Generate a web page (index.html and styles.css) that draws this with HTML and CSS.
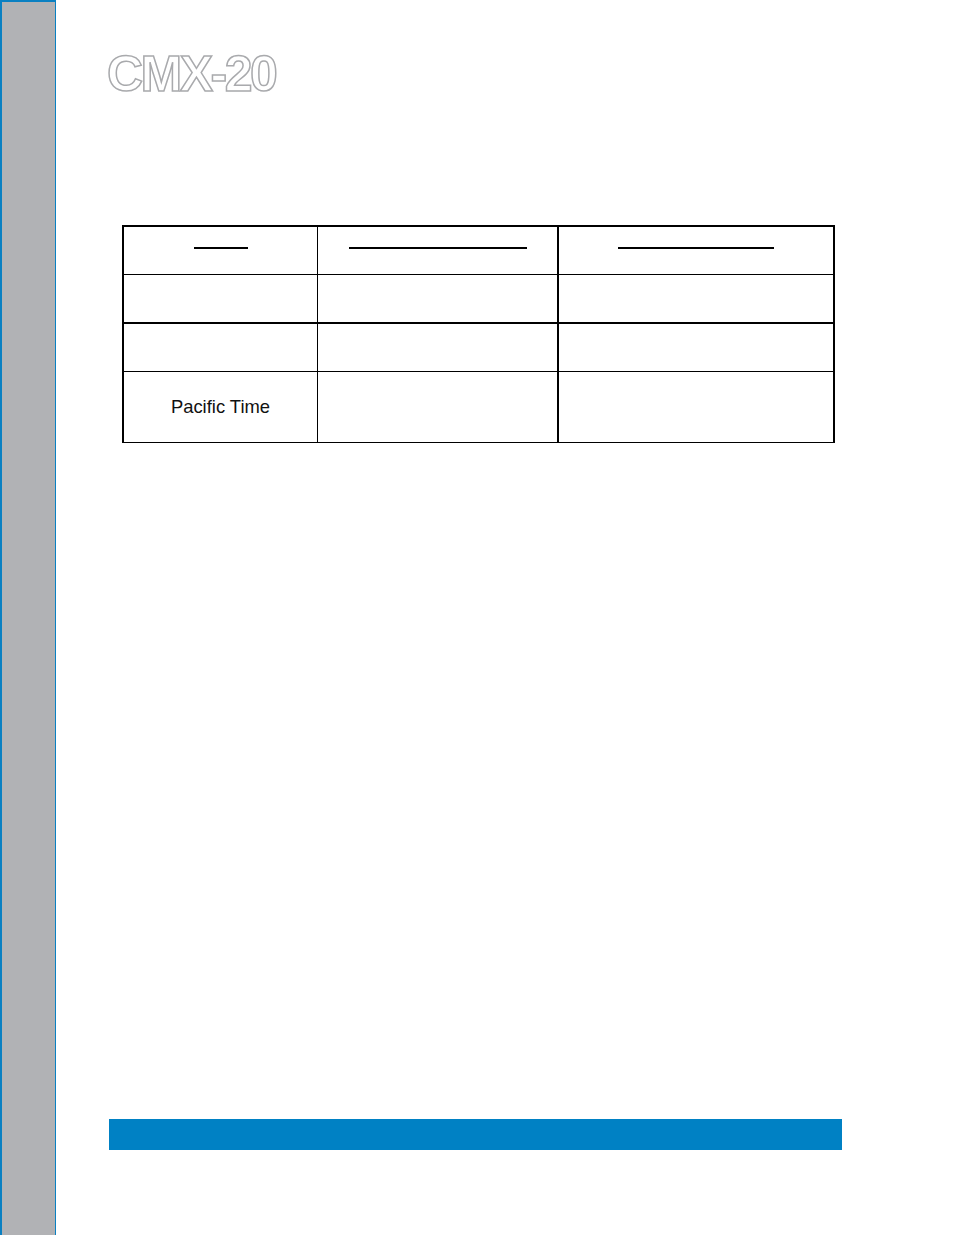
FILE: index.html
```html
<!DOCTYPE html>
<html lang="en">
<head>
<meta charset="utf-8">
<title>CMX-20</title>
<link rel="stylesheet" href="styles.css">
</head>
<body>
<div class="page">
  <aside class="sidebar"></aside>
  <main class="main">
    <h1 class="title">CMX-20</h1>
    <div class="grid">
      <div class="cell c1 head"><span class="rule r1"></span></div>
      <div class="cell c2 head"><span class="rule r2"></span></div>
      <div class="cell c3 head"><span class="rule r3"></span></div>

      <div class="cell c1 row2"></div>
      <div class="cell c2 row2"></div>
      <div class="cell c3 row2"></div>

      <div class="cell c1 row3"></div>
      <div class="cell c2 row3"></div>
      <div class="cell c3 row3"></div>

      <div class="cell c1 row4">Pacific Time</div>
      <div class="cell c2 row4"></div>
      <div class="cell c3 row4"></div>
    </div>
    <div class="footer-bar"></div>
  </main>
</div>
</body>
</html>
```

FILE: styles.css
```css
* { box-sizing: border-box; }

html, body {
  margin: 0;
  padding: 0;
  background: #ffffff;
  font-family: "Liberation Sans", Arial, sans-serif;
}

.page {
  display: flex;
  min-height: 1235px;
}

.sidebar {
  width: 56px;
  flex: 0 0 56px;
  min-height: 1235px;
  background: #b1b2b5;
  border-top: 2px solid #0a80c2;
  border-left: 2px solid #0a80c2;
  border-right: 1px solid #0a80c2;
}

.main {
  flex: 1;
  display: flex;
  flex-direction: column;
  min-height: 1235px;
}

.title {
  margin: 49px 0 0 51px;
  font-family: "Liberation Sans", Arial, sans-serif;
  font-weight: bold;
  font-size: 50px;
  line-height: 50px;
  height: 50px;
  letter-spacing: -2.5px;
  color: #ffffff;
  -webkit-text-stroke: 1.5px #a9aaad;
}

.grid {
  margin: 126px 0 0 66px;
  width: 713px;
  display: grid;
  grid-template-columns: 194px 241px 274px;
  grid-template-rows: 48px 49px 48px 70px;
  border: 2px solid #000;
  border-bottom-width: 1.5px;
}

.cell {
  display: flex;
  align-items: center;
  justify-content: center;
  font-size: 18.4px;
  color: #111;
}

.c1 { border-right: 1px solid #000; }
.c2 { border-right: 2px solid #000; }

.head, .row3 { border-bottom: 1px solid #000; }
.row2 { border-bottom: 2px solid #000; }

.head {
  align-items: flex-start;
}

.rule {
  display: block;
  height: 2px;
  background: #000;
  margin-top: 20px;
}
.r1 { width: 54px; }
.r2 { width: 178px; }
.r3 { width: 156px; }

.footer-bar {
  margin: auto 0 85px 53px;
  width: 733px;
  height: 31px;
  background: #0081c4;
}
```
